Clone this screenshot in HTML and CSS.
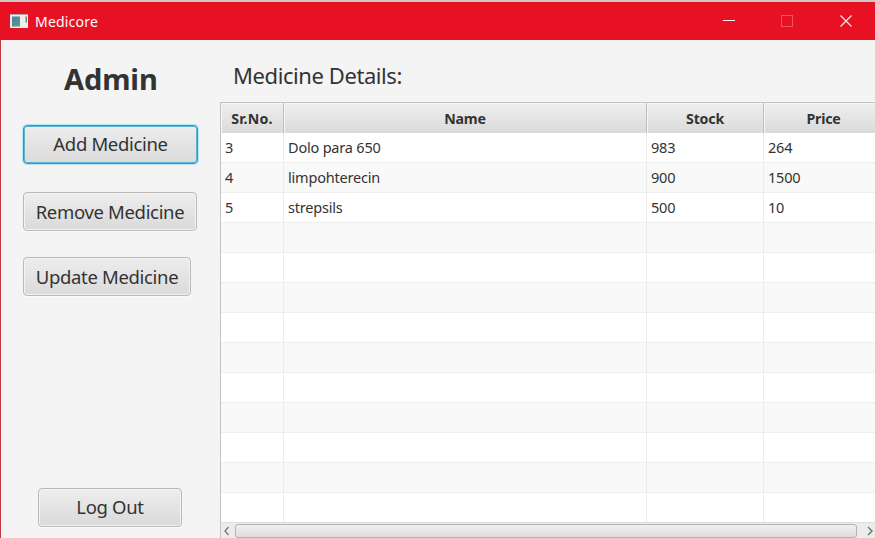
FILE: index.html
```html
<!DOCTYPE html>
<html lang="en">
<head>
<meta charset="utf-8">
<title>Medicore</title>
<link rel="stylesheet" href="styles.css">
</head>
<body>
<div class="window">
  <header class="titlebar">
    <svg class="app-icon" width="18" height="14" viewBox="0 0 18 14">
      <defs><linearGradient id="pane" x1="0" y1="0" x2="1" y2="1"><stop offset="0" stop-color="#4a7fa0"/><stop offset="1" stop-color="#55a583"/></linearGradient></defs>
      <rect width="18" height="14" fill="#f3e9e9"/>
      <rect x="0" y="0" width="18" height="1" fill="#b9a5a5"/>
      <rect x="2" y="2.500" width="8" height="10" fill="url(#pane)"/>
      <rect x="11" y="3" width="4" height="9" fill="#e9eeee"/>
      <rect x="15.500" y="2.500" width="1.500" height="6" fill="#568b80"/>
    </svg>
    <span class="app-name">Medicore</span>
    <svg class="controls" width="126" height="14" viewBox="0 0 126 14" fill="none">
      <path d="M0 6.500H12" stroke="#fff"/>
      <rect x="58.500" y="1.500" width="11" height="11" stroke="#f4525e"/>
      <path d="M117.500 1.500L128.500 12.500M128.500 1.500L117.500 12.500" stroke="#fde3e5" stroke-width="1.300"/>
    </svg>
  </header>
  <div class="body">
    <aside class="sidebar">
      <h1><span>Admin</span></h1>
      <button class="btn add focused"><span>Add Medicine</span></button>
      <button class="btn remove"><span>Remove Medicine</span></button>
      <button class="btn update"><span>Update Medicine</span></button>
      <button class="btn logout"><span>Log Out</span></button>
    </aside>
    <main class="content">
      <h2><span>Medicine Details:</span></h2>
      <div class="table">
        <div class="row head"><div><span>Sr.No.</span></div><div><span>Name</span></div><div><span>Stock</span></div><div><span>Price</span></div></div>
        <div class="row"><div>3</div><div>Dolo para 650</div><div>983</div><div>264</div></div>
        <div class="row"><div>4</div><div>limpohterecin</div><div>900</div><div>1500</div></div>
        <div class="row"><div>5</div><div>strepsils</div><div>500</div><div>10</div></div>
        <div class="row"><div></div><div></div><div></div><div></div></div>
        <div class="row"><div></div><div></div><div></div><div></div></div>
        <div class="row"><div></div><div></div><div></div><div></div></div>
        <div class="row"><div></div><div></div><div></div><div></div></div>
        <div class="row"><div></div><div></div><div></div><div></div></div>
        <div class="row"><div></div><div></div><div></div><div></div></div>
        <div class="row"><div></div><div></div><div></div><div></div></div>
        <div class="row"><div></div><div></div><div></div><div></div></div>
        <div class="row"><div></div><div></div><div></div><div></div></div>
        <div class="row last"><div></div><div></div><div></div><div></div></div>
        <div class="scrollbar">
          <svg width="14" height="17" viewBox="0 0 14 17" fill="none"><path d="M7.500 5L4 9L7.500 13" stroke="#777" stroke-width="1.300"/></svg>
          <div class="thumb"></div>
          <svg width="18" height="17" viewBox="0 0 18 17" fill="none"><path d="M11 5L15 9L11 13" stroke="#777" stroke-width="1.500"/></svg>
        </div>
      </div>
    </main>
  </div>
</div>
</body>
</html>
```
FILE: styles.css
```css
* { box-sizing: border-box; }
body { margin: 0; overflow: hidden; font-family: "Noto Sans", "Open Sans", sans-serif; color: #333; }
.window { width: 875px; height: 538px; display: flex; flex-direction: column; background: #f4f4f4; border-top: 2px solid #cfc6c6; overflow: hidden; }
.titlebar { height: 38px; flex: none; background: #e81123; display: flex; align-items: center; padding-left: 10px; color: #fff; }
.app-icon { margin-right: 7px; margin-top: -1px; }
.app-name { font-size: 14px; letter-spacing: 0.2px; }
.controls { margin-left: auto; margin-right: 26px; overflow: visible; }
.body { flex: 1; min-height: 0; display: flex; border-left: 1px solid #c53a45; }
.sidebar { width: 219px; flex: none; display: flex; flex-direction: column; align-items: flex-start; padding-left: 22px; }
h1 { margin: 19px 0 0 41px; height: 40px; line-height: 40px; font-size: 29px; white-space: nowrap; letter-spacing: -0.1px; }
.btn { height: 39px; margin: 0; padding: 0; border: 1px solid #b9b9b9; border-radius: 4px; background: linear-gradient(#ededed, #dadada); box-shadow: inset 0 0 0 1px #f3f3f3, 0 1px 0 #fafafa; font-family: inherit; font-size: 18.5px; color: #333; white-space: nowrap; text-align: center; letter-spacing: -0.33px; line-height: 35px; padding-bottom: 2px; }
.add { width: 175px; margin-top: 26px; }
.focused { border-color: #2b9cc9; box-shadow: inset 0 0 0 1px #5cb5d6, 0 0 1px 1px #b4e4f4; }
.remove { width: 174px; margin-top: 28px; line-height: 37px; padding-bottom: 0; }
.update { width: 168px; margin-top: 26px; line-height: 37px; padding-bottom: 0; }
.logout { width: 144px; margin: auto 0 11px 15px; }
.content { flex: 1; min-width: 0; display: flex; flex-direction: column; }
h2 { margin: 0; height: 62px; padding: 15px 0 0 13px; line-height: 40px; font-size: 22px; font-weight: 400; white-space: nowrap; letter-spacing: -0.42px; }
.table { flex: 1; min-height: 0; border: 1px solid #c4c4c4; border-right: 0; border-bottom: 0; overflow: hidden; display: flex; flex-direction: column; background: #fff; font-size: 14.5px; }
.row { display: grid; grid-template-columns: 63px 363px 117px 120px; width: 663px; height: 30px; flex: none; line-height: 29px; background: #fff; }
.row:nth-child(odd) { background: #f9f9f9; }
.row > div { padding-left: 4px; border-right: 1px solid #ececec; border-bottom: 1px solid #eee; white-space: nowrap; letter-spacing: -0.2px; }
.row.head { background: linear-gradient(#efefef, #dadada); font-weight: 700; font-size: 14.2px; }
.row.head > div { padding: 0; text-align: center; line-height: 31px; border-right-color: #bdbdbd; border-bottom-color: #bdbdbd; box-shadow: inset 1px 1px 0 #f5f5f5; }
.row.last { height: 29px; }
.row.last > div { border-bottom: 0; }
.row.head > div:first-child { letter-spacing: 0.2px; }
.scrollbar { flex: 1; display: flex; background: #ececec; border-top: 1px solid #dcdcdc; }
.scrollbar svg { flex: none; margin-top: -1px; }
.thumb { flex: 1; height: 14px; margin-top: 1px; border: 1px solid #b3b3b3; border-radius: 3px; background: linear-gradient(#f0f0f0, #dcdcdc); }
```
